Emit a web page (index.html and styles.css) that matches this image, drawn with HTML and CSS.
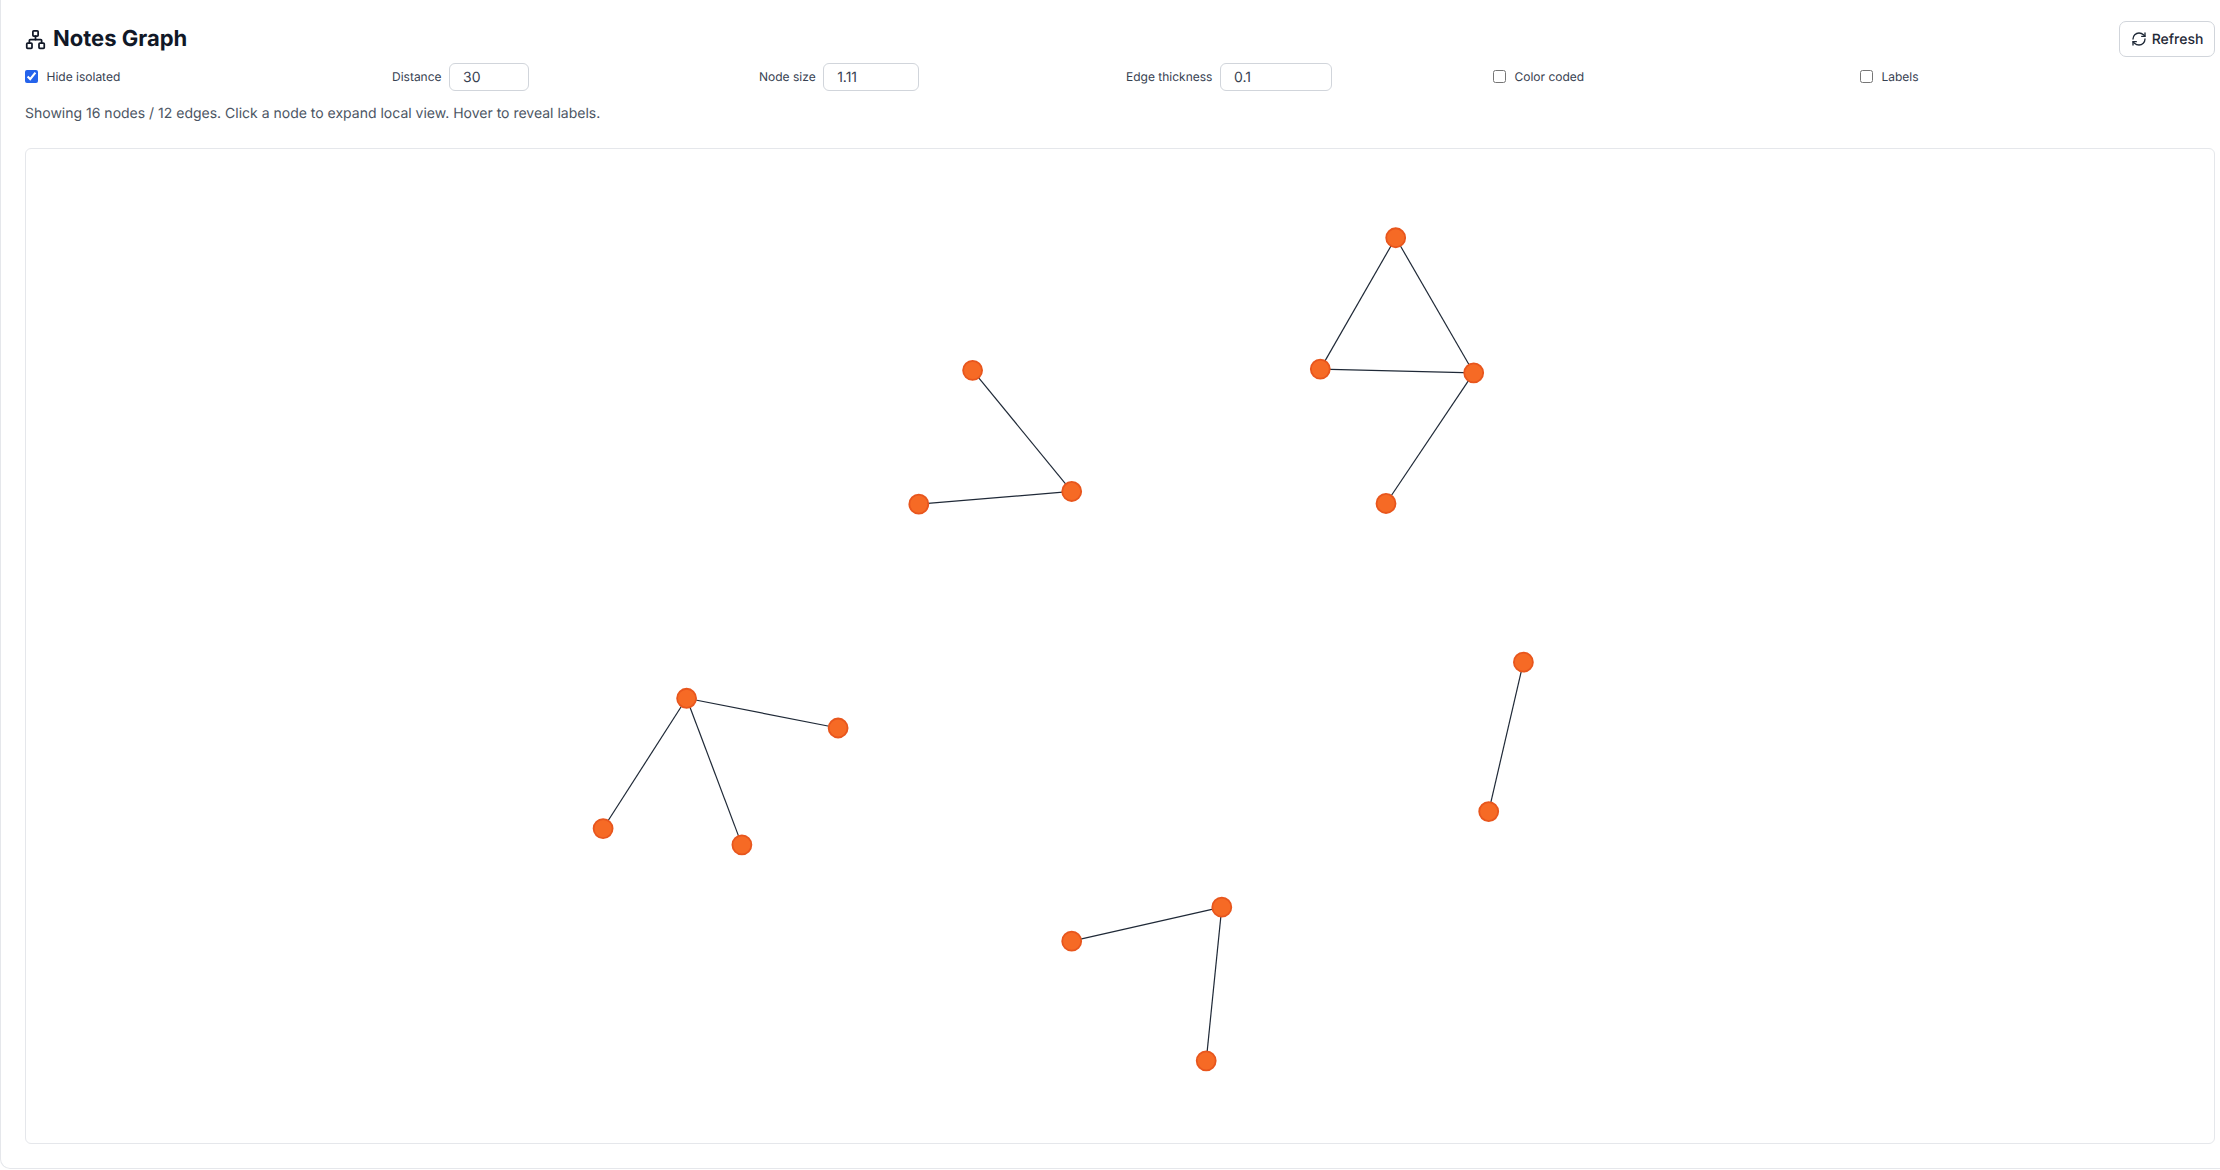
FILE: index.html
```html
<!DOCTYPE html>
<html lang="en">
<head>
<meta charset="utf-8">
<title>Notes Graph</title>
<link rel="stylesheet" href="styles.css">
</head>
<body>
<main class="card">
  <header class="header">
    <h1 class="title">
      <svg class="title-icon" viewBox="0 0 24 24" fill="none" stroke="currentColor" stroke-width="2" stroke-linecap="round" stroke-linejoin="round">
        <rect x="16" y="16" width="6" height="6" rx="1"/>
        <rect x="2" y="16" width="6" height="6" rx="1"/>
        <rect x="9" y="2" width="6" height="6" rx="1"/>
        <path d="M5 16v-3a1 1 0 0 1 1-1h12a1 1 0 0 1 1 1v3"/>
        <path d="M12 12V8"/>
      </svg>
      <span>Notes Graph</span>
    </h1>
    <button class="refresh" type="button">
      <svg class="refresh-icon" viewBox="0 0 24 24" fill="none" stroke="currentColor" stroke-width="2" stroke-linecap="round" stroke-linejoin="round">
        <path d="M3 12a9 9 0 0 1 9-9 9.75 9.75 0 0 1 6.74 2.74L21 8"/>
        <path d="M21 3v5h-5"/>
        <path d="M21 12a9 9 0 0 1-9 9 9.75 9.75 0 0 1-6.74-2.74L3 16"/>
        <path d="M8 16H3v5"/>
      </svg>
      <span>Refresh</span>
    </button>
  </header>

  <section class="controls">
    <label class="control check"><input type="checkbox" checked><span>Hide isolated</span></label>
    <label class="control"><span>Distance</span><input class="field w-80" type="text" value="30"></label>
    <label class="control"><span>Node size</span><input class="field w-96" type="text" value="1.11"></label>
    <label class="control"><span>Edge thickness</span><input class="field w-112" type="text" value="0.1"></label>
    <label class="control check"><input type="checkbox"><span>Color coded</span></label>
    <label class="control check"><input type="checkbox"><span>Labels</span></label>
  </section>

  <p class="status">Showing 16 nodes / 12 edges. Click a node to expand local view. Hover to reveal labels.</p>

  <div class="graph">
    <svg class="graph-svg" viewBox="26 149 2188 993" preserveAspectRatio="none">
      <g class="edges">
        <line x1="1395.7" y1="237.7" x2="1320.3" y2="369"/>
        <line x1="1395.7" y1="237.7" x2="1473.7" y2="372.7"/>
        <line x1="1320.3" y1="369" x2="1473.7" y2="372.7"/>
        <line x1="1473.7" y1="372.7" x2="1386" y2="503.3"/>
        <line x1="972.6" y1="370.2" x2="1071.7" y2="491.3"/>
        <line x1="1071.7" y1="491.3" x2="918.8" y2="504"/>
        <line x1="686.6" y1="698" x2="838.1" y2="727.7"/>
        <line x1="686.6" y1="698" x2="603.1" y2="828.2"/>
        <line x1="686.6" y1="698" x2="741.9" y2="844.5"/>
        <line x1="1523.4" y1="661.9" x2="1488.7" y2="811.2"/>
        <line x1="1221.8" y1="906.8" x2="1071.7" y2="940.8"/>
        <line x1="1221.8" y1="906.8" x2="1206.2" y2="1060.4"/>
      </g>
      <g class="nodes">
        <circle cx="1395.7" cy="237.7" r="9.5"/>
        <circle cx="1320.3" cy="369" r="9.5"/>
        <circle cx="1473.7" cy="372.7" r="9.5"/>
        <circle cx="1386" cy="503.3" r="9.5"/>
        <circle cx="972.6" cy="370.2" r="9.5"/>
        <circle cx="1071.7" cy="491.3" r="9.5"/>
        <circle cx="918.8" cy="504" r="9.5"/>
        <circle cx="686.6" cy="698" r="9.5"/>
        <circle cx="838.1" cy="727.7" r="9.5"/>
        <circle cx="603.1" cy="828.2" r="9.5"/>
        <circle cx="741.9" cy="844.5" r="9.5"/>
        <circle cx="1523.4" cy="661.9" r="9.5"/>
        <circle cx="1488.7" cy="811.2" r="9.5"/>
        <circle cx="1221.8" cy="906.8" r="9.5"/>
        <circle cx="1071.7" cy="940.8" r="9.5"/>
        <circle cx="1206.2" cy="1060.4" r="9.5"/>
      </g>
    </svg>
  </div>
</main>
</body>
</html>
```
FILE: styles.css
```css
* { box-sizing: border-box; }
html, body { margin: 0; height: 100%; overflow: hidden; background: #fff; }
body { font-family: Inter, "Liberation Sans", sans-serif; color: #374151; text-rendering: geometricPrecision; }

.card {
  height: 1168.5px;
  padding: 21px 5px 24px 24px;
  background: #fff;
  border-left: 1.5px solid #e5e7eb;
  border-bottom: 1.5px solid #e5e7eb;
  border-bottom-left-radius: 10px;
  display: flex;
  flex-direction: column;
}

.header { display: flex; justify-content: space-between; align-items: center; height: 36px; }
.title { margin: 0; display: flex; align-items: center; gap: 7px; font-size: 22px; font-weight: 700; color: #111827; line-height: 28px; }
.title-icon { width: 21px; height: 21px; }

.refresh {
  width: 96px; height: 36px; padding: 0;
  display: flex; align-items: center; justify-content: center; gap: 5px;
  background: #fff; border: 1px solid #d1d5db; border-radius: 7px;
  font: 500 14px Inter, "Liberation Sans", sans-serif; color: #1f2937; text-rendering: geometricPrecision;
}
.refresh-icon { width: 16px; height: 16px; }

.controls { display: grid; grid-template-columns: repeat(6, 1fr); gap: 12px; margin-top: 5px; height: 29px; }
.control { display: flex; align-items: center; gap: 7.5px; font-size: 12px; color: #374151; }
.check input { margin: 0; width: 13px; height: 13px; accent-color: #2563eb; }
.check { gap: 8.5px; }

.field {
  height: 28px; padding: 2px 13px 0;
  border: 1px solid #d1d5db; border-radius: 6px;
  font: 14px Inter, "Liberation Sans", sans-serif; color: #374151; background: #fff; text-rendering: geometricPrecision;
}
.w-80 { width: 80px; }
.w-96 { width: 96px; }
.w-112 { width: 112px; }

.status { margin: 13px 0 0; font-size: 14px; line-height: 20px; color: #4b5563; }

.graph { flex: 1; margin-top: 24px; border: 1px solid #e5e7eb; border-radius: 6px; min-height: 0; overflow: hidden; }
.graph-svg { display: block; width: 100%; height: 100%; }
.edges line { stroke: #1f2937; stroke-width: 1.2; }
.nodes circle { fill: #f66a25; stroke: #e8561d; stroke-width: 1.8; }
```
